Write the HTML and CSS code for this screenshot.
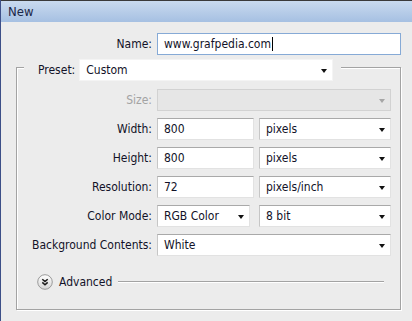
FILE: index.html
```html
<!DOCTYPE html>
<html lang="en">

<head>
    <meta charset="UTF-8">
    <meta name="viewport" content="width=device-width, initial-scale=1.0">
    <title>New</title>
    <link rel="stylesheet" href="styles.css">
</head>

<body>
    <div class="window">
        <div class="titlebar">New</div>

        <div class="content">
            <div class="row name-row">
                <label class="label">Name:</label>
                <div class="field name-field"><span class="caret">www.grafpedia.com</span></div>
            </div>

            <div class="group">
                <div class="preset">
                    <label class="preset-label">Preset:</label>
                    <div class="select preset-select">Custom</div>
                </div>

                <div class="row size-row">
                    <label class="label disabled">Size:</label>
                    <div class="select disabled-select wide"></div>
                </div>

                <div class="row">
                    <label class="label">Width:</label>
                    <div class="pair">
                        <div class="field num">800</div>
                        <div class="select unit">pixels</div>
                    </div>
                </div>

                <div class="row">
                    <label class="label">Height:</label>
                    <div class="pair">
                        <div class="field num">800</div>
                        <div class="select unit">pixels</div>
                    </div>
                </div>

                <div class="row">
                    <label class="label">Resolution:</label>
                    <div class="pair">
                        <div class="field num">72</div>
                        <div class="select unit">pixels/inch</div>
                    </div>
                </div>

                <div class="row">
                    <label class="label">Color Mode:</label>
                    <div class="pair">
                        <div class="select mode">RGB Color</div>
                        <div class="select unit">8 bit</div>
                    </div>
                </div>

                <div class="row">
                    <label class="label">Background Contents:</label>
                    <div class="select wide">White</div>
                </div>

                <div class="advanced">
                    <svg class="adv-btn" width="16" height="16" viewBox="0 0 16 16">
                        <defs>
                            <linearGradient id="g" x1="0" y1="0" x2="0" y2="1">
                                <stop offset="0" stop-color="#ffffff" />
                                <stop offset="1" stop-color="#d6d6d6" />
                            </linearGradient>
                        </defs>
                        <circle cx="8" cy="8" r="7.3" fill="url(#g)" stroke="#9a9a9a" stroke-width="1" />
                        <path d="M5.3 5.2 L8 7.6 L10.7 5.2 M5.3 8.4 L8 10.8 L10.7 8.4" fill="none" stroke="#1a1a1a" stroke-width="1.5" />
                    </svg>
                    <span class="adv-text">Advanced</span>
                    <span class="adv-line"></span>
                </div>
            </div>
        </div>
    </div>
</body>

</html>
```

FILE: styles.css
```css
* {
    padding: 0;
    margin: 0;
    box-sizing: border-box;
}

body {
    background-color: #ececec;
    font-family: "DejaVu Sans Condensed", "Liberation Sans", sans-serif;
    font-size: 12px;
    color: #121228;
}

.window {
    width: 412px;
    height: 321px;
    border-left: 1px solid #3d4f88;
    background-color: #ececec;
}

.titlebar {
    height: 22px;
    border-top: 1px solid #3a3a3a;
    background: linear-gradient(#c9daef, #a6c0e2);
    color: #1b2748;
    font-size: 13px;
    line-height: 21px;
    padding-left: 7px;
}

.content {
    padding-top: 11px;
}

.row {
    display: flex;
    align-items: center;
    height: 22px;
}

.label {
    width: 135px;
    margin-right: 5px;
    text-align: right;
    white-space: nowrap;
}

.name-row .label {
    width: 151px;
}

.disabled {
    color: #a3a3a3;
}

.field,
.select {
    height: 22px;
    background-color: #fff;
    border: 1px solid #e2e2e2;
    border-top-color: #a9a9a9;
    border-left-color: #c6c6c6;
    padding-left: 6px;
    line-height: 20px;
    white-space: nowrap;
    position: relative;
}

.select::after {
    content: "";
    position: absolute;
    right: 5px;
    top: 9px;
    border-left: 3.5px solid transparent;
    border-right: 3.5px solid transparent;
    border-top: 4px solid #111;
}

.name-field {
    width: 244px;
    border: 1px solid #86aad6;
}

.caret {
    border-right: 1px solid #000;
    padding-right: 1px;
}

.group {
    margin: 12px 0 0 15px;
    width: 385px;
    height: 243px;
    border: 1px solid #a3a3a3;
    box-shadow: inset 1px 1px 0 #fff, 1px 1px 0 #fff;
}

.preset {
    display: flex;
    align-items: center;
    align-self: flex-start;
    width: 317px;
    margin: -9px 0 0 7px;
    padding: 0 6px 0 14px;
    background-color: #ececec;
}

.preset-label {
    margin-right: 4px;
}

.preset-select {
    width: 254px;
    border-color: #f4f4f4;
}

.size-row {
    margin-top: 8px;
}

.row+.row {
    margin-top: 7px;
}

.pair {
    display: flex;
    justify-content: space-between;
    width: 234px;
}

.wide {
    width: 234px;
}

.num {
    width: 97px;
}

.unit {
    width: 132px;
}

.mode {
    width: 93px;
}

.disabled-select {
    background-color: #e6e6e6;
    border-color: #d2d2d2;
}

.disabled-select::after {
    border-top-color: #a6a6a6;
}

.advanced {
    display: flex;
    align-items: center;
    margin-top: 18px;
    padding-left: 20px;
    height: 16px;
}

.adv-btn {
    margin-right: 6px;
}

.adv-text {
    margin-right: 6px;
}

.adv-line {
    flex: 1;
    margin-right: 16px;
    border-top: 1px solid #a3a3a3;
    border-bottom: 1px solid #fff;
}
```
